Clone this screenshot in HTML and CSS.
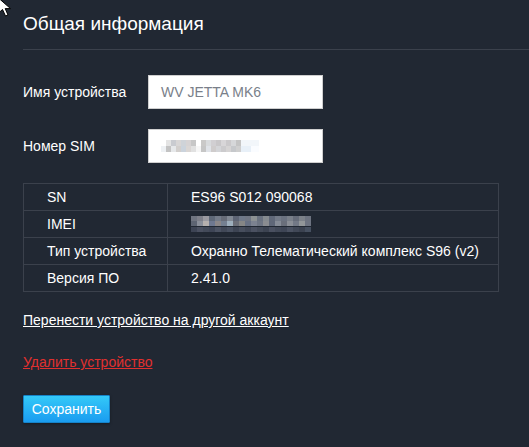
FILE: index.html
```html
<!DOCTYPE html>
<html lang="ru">
<head>
<meta charset="utf-8">
<title>Общая информация</title>
<link rel="stylesheet" href="styles.css">
</head>
<body>
<svg class="cursor" width="14" height="20" viewBox="0 0 14 20"><path d="M-1.5 -2 L-1.5 13 L2.5 9.5 L5.5 16 L8 15 L5.2 8.6 L10.5 8.6 Z" fill="#fff" stroke="#000" stroke-width="1"/></svg>
<main class="panel">
  <h1 class="title">Общая информация</h1>
  <div class="divider"></div>
  <form class="form">
    <div class="field">
      <label class="label">Имя устройства</label>
      <div class="input"><span class="input-text">WV JETTA MK6</span></div>
    </div>
    <div class="field">
      <label class="label">Номер SIM</label>
      <div class="input"><span class="blur blur-sim"></span></div>
    </div>
  </form>
  <table class="info">
    <tr><td class="k">SN</td><td class="v">ES96 S012 090068</td></tr>
    <tr><td class="k">IMEI</td><td class="v"><span class="blur blur-imei"></span></td></tr>
    <tr><td class="k">Тип устройства</td><td class="v">Охранно Телематический комплекс S96 (v2)</td></tr>
    <tr><td class="k">Версия ПО</td><td class="v">2.41.0</td></tr>
  </table>
  <div class="links">
    <a class="link" href="#">Перенести устройство на другой аккаунт</a>
    <a class="link danger" href="#">Удалить устройство</a>
  </div>
  <button class="btn" type="button">Сохранить</button>
</main>
</body>
</html>
```
FILE: styles.css
```css
html, body {
  margin: 0;
  padding: 0;
  background: #212833;
  height: 100%;
}
body {
  font-family: "Liberation Sans", Arial, sans-serif;
  color: #ffffff;
  font-size: 14px;
  overflow: hidden;
}
.cursor {
  position: absolute;
  left: 0;
  top: 0;
  z-index: 10;
}
.panel {
  padding-left: 23px;
  padding-top: 13px;
}
.title {
  margin: 0;
  font-size: 19px;
  font-weight: normal;
  line-height: 22px;
  color: #ffffff;
}
.divider {
  height: 1px;
  background: #3b414c;
  margin-top: 14px;
}
.form {
  margin-top: 25px;
  display: flex;
  flex-direction: column;
  gap: 20px;
}
.field {
  display: flex;
  align-items: center;
  height: 34px;
}
.label {
  width: 125px;
  line-height: 16px;
}
.input {
  box-sizing: border-box;
  width: 175px;
  height: 34px;
  background: #fff;
  border: 1px solid #cfcfcf;
  display: flex;
  align-items: center;
  padding-left: 12px;
}
.input-text {
  color: #7a7f8a;
  font-size: 14px;
}
.blur {
  display: block;
}
.blur-sim {
  width: 98px;
  height: 12px;
  margin-left: 0;
  background:
    linear-gradient(90deg,
      #fff 0 5px, #e4e4e4 5px 10px, #c9cbd0 10px 15px, #d8d6d6 15px 20px, #cfd3d8 20px 25px, #d6d3d4 25px 30px, #c7c7c7 30px 35px, #fff 35px 40px,
      #cac9c8 40px 45px, #d9dbdd 45px 50px, #d1cfd2 50px 55px, #c9c7c9 55px 60px, #d8d6d8 60px 65px, #cbc9cb 65px 70px, #d6d7d9 70px 75px, #c4c4c4 75px 80px, #f2f6fa 80px 98px) top/100% 50% no-repeat,
    linear-gradient(90deg,
      #eef1f4 0 5px, #c3c3c3 5px 10px, #e6e8ea 10px 15px, #d2cfcd 15px 20px, #cbd3dc 20px 25px, #dad6d4 25px 30px, #e1e1e1 30px 35px, #f6f6f6 35px 40px,
      #c6c6c6 40px 45px, #e0e3e8 45px 50px, #cfcccc 50px 55px, #d4d5d8 55px 60px, #cccbcd 60px 65px, #d6d4d4 65px 70px, #c6c8cb 70px 75px, #cfcfcf 75px 80px, #e8f0f8 80px 90px, #fafcff 90px 98px) bottom/100% 50% no-repeat;
}
.blur-imei {
  width: 120px;
  height: 16px;
  background:
    linear-gradient(90deg,
      #6f7480 0 6px, #7e808a 6px 12px, #9a9aa1 12px 18px, #5e6878 18px 24px, #737b89 24px 30px, #676c78 30px 36px, #818893 36px 42px, #5d6474 42px 48px,
      #6f7888 48px 54px, #707683 54px 60px, #8c9193 60px 66px, #6a7280 66px 72px, #858a8f 72px 78px, #606878 78px 84px, #737a87 84px 90px, #6b7280 90px 96px, #797f89 96px 102px, #666c79 102px 108px, #7c8189 108px 114px, #6d7380 114px 120px) top/100% 34% no-repeat,
    linear-gradient(90deg,
      #5d6472 0 6px, #8a8f9a 6px 12px, #b5b0ae 12px 18px, #6e7890 18px 24px, #8a8688 24px 30px, #758091 30px 36px, #9eafbd 36px 42px, #6b6e78 42px 48px,
      #858686 48px 54px, #687184 54px 60px, #7c8290 60px 66px, #6e7583 66px 72px, #8a8c90 72px 78px, #5f6778 78px 84px, #858b96 84px 90px, #6a6f7b 90px 96px, #8a8e96 96px 102px, #737986 102px 108px, #929699 108px 114px, #6d7381 114px 120px) center/100% 34% no-repeat,
    linear-gradient(90deg,
      #3d4454 0 6px, #4a5060 6px 12px, #434a59 12px 18px, #3e4556 18px 24px, #4b5262 24px 30px, #414857 30px 36px, #485060 36px 42px, #3d4453 42px 48px,
      #474e5d 48px 54px, #3f4655 54px 60px, #4b5161 60px 66px, #434a58 66px 72px, #3c4351 72px 78px, #4a5060 78px 84px, #424958 84px 90px, #3e4555 90px 96px, #4a5161 96px 102px, #414857 102px 108px, #3b4250 108px 114px, #465060 114px 120px) bottom/100% 34% no-repeat;
}
.info {
  margin-top: 20px;
  width: 476px;
  border-collapse: collapse;
  border: 1px solid #3b414c;
}
.info td {
  border: 1px solid #3b414c;
  height: 27px;
  padding: 0 0 0 23px;
  box-sizing: border-box;
  line-height: 16px;
  vertical-align: middle;
}
.info td.k {
  width: 144px;
}
.links {
  display: flex;
  flex-direction: column;
  align-items: flex-start;
  gap: 26px;
  margin-top: 20px;
}
.link {
  color: #ffffff;
  text-decoration: underline;
  line-height: 16px;
}
.link.danger {
  color: #e0302f;
}
.btn {
  margin-top: 25px;
  font-family: "Liberation Sans", Arial, sans-serif;
  font-size: 14px;
  color: #fff;
  height: 28px;
  width: 87px;
  padding: 0;
  border: 1px solid #1683c9;
  border-radius: 1px;
  background: linear-gradient(#34c9f8, #1a9cf0);
  box-shadow: 0 1px 3px rgba(0,0,0,0.35);
  cursor: pointer;
}
```
